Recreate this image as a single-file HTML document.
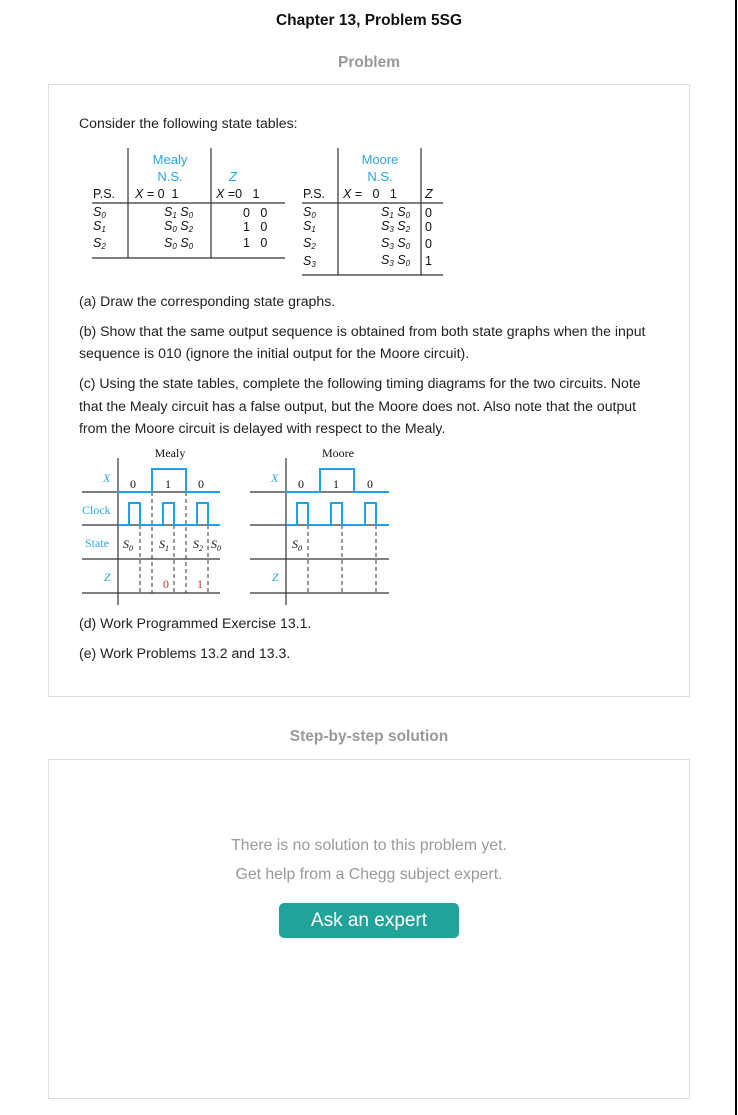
<!DOCTYPE html>
<html><head><meta charset="utf-8"><style>
body{margin:0;width:738px;height:1115px;background:#fff;position:relative;font-family:"Liberation Sans",sans-serif;overflow:hidden}
.a{position:absolute;white-space:nowrap}
.box{position:absolute;border:1px solid #ddd;box-sizing:border-box}
.p{font-size:14.1px;color:#222;line-height:22px}
</style></head><body>
<div style="position:absolute;left:735px;top:0;width:2px;height:1115px;background:#000"></div>
<div class="a" style="left:0;width:738px;text-align:center;top:12px;font-size:15.5px;font-weight:bold;color:#111">Chapter 13, Problem 5SG</div>
<div class="a" style="left:0;width:738px;text-align:center;top:54px;font-size:15.5px;font-weight:bold;color:#999">Problem</div>
<div class="box" style="left:48px;top:84px;width:642px;height:613px"></div>
<div class="a p" style="left:79px;top:112px">Consider the following state tables:</div>
<svg class="a" style="left:0;top:0" width="738" height="700" font-family="Liberation Sans,sans-serif" font-size="12">
<g stroke="#333" stroke-width="1.2">
<line x1="128" y1="148" x2="128" y2="258"/><line x1="211" y1="148" x2="211" y2="258"/>
<line x1="92" y1="203" x2="285" y2="203"/><line x1="92" y1="258" x2="285" y2="258"/>
<line x1="338" y1="148" x2="338" y2="275"/><line x1="421" y1="148" x2="421" y2="275"/>
<line x1="302" y1="203" x2="443" y2="203"/><line x1="302" y1="275" x2="443" y2="275"/>
</g>
<g fill="#2aa6e6" text-anchor="middle" font-size="13"><text x="170" y="164">Mealy</text><text x="170" y="181">N.S.</text><text x="233" y="181" font-style="italic">Z</text>
<text x="380" y="164">Moore</text><text x="380" y="181">N.S.</text></g>
<g fill="#111" font-size="12.5">
<text x="93" y="198">P.S.</text><text x="135" y="198"><tspan font-style="italic">X</tspan> = 0&#160;&#160;1</text><text x="216" y="198"><tspan font-style="italic">X</tspan> =0&#160;&#160;&#160;1</text>
<text x="303" y="198">P.S.</text><text x="343" y="198"><tspan font-style="italic">X</tspan> =&#160;&#160;&#160;0&#160;&#160;&#160;1</text><text x="425" y="198" font-style="italic">Z</text>
<g font-style="italic"><text x="93" y="216">S<tspan font-size="8" dy="2">0</tspan></text><text x="93" y="230">S<tspan font-size="8" dy="2">1</tspan></text><text x="93" y="247">S<tspan font-size="8" dy="2">2</tspan></text>
<text x="164" y="216">S<tspan font-size="8" dy="2">1</tspan><tspan dy="-2"> S</tspan><tspan font-size="8" dy="2">0</tspan></text>
<text x="164" y="230">S<tspan font-size="8" dy="2">0</tspan><tspan dy="-2"> S</tspan><tspan font-size="8" dy="2">2</tspan></text>
<text x="164" y="247">S<tspan font-size="8" dy="2">0</tspan><tspan dy="-2"> S</tspan><tspan font-size="8" dy="2">0</tspan></text>
<text x="303" y="216">S<tspan font-size="8" dy="2">0</tspan></text><text x="303" y="230">S<tspan font-size="8" dy="2">1</tspan></text><text x="303" y="247">S<tspan font-size="8" dy="2">2</tspan></text><text x="303" y="265">S<tspan font-size="8" dy="2">3</tspan></text>
<text x="381" y="216">S<tspan font-size="8" dy="2">1</tspan><tspan dy="-2"> S</tspan><tspan font-size="8" dy="2">0</tspan></text>
<text x="381" y="230">S<tspan font-size="8" dy="2">3</tspan><tspan dy="-2"> S</tspan><tspan font-size="8" dy="2">2</tspan></text>
<text x="381" y="247">S<tspan font-size="8" dy="2">3</tspan><tspan dy="-2"> S</tspan><tspan font-size="8" dy="2">0</tspan></text>
<text x="381" y="264">S<tspan font-size="8" dy="2">3</tspan><tspan dy="-2"> S</tspan><tspan font-size="8" dy="2">0</tspan></text></g>
<text x="243" y="217">0&#160;&#160;&#160;0</text><text x="243" y="231">1&#160;&#160;&#160;0</text><text x="243" y="247">1&#160;&#160;&#160;0</text>
<text x="425" y="217">0</text><text x="425" y="231">0</text><text x="425" y="248">0</text><text x="425" y="265">1</text>
</g>
</svg>
<div class="a p" style="left:79px;top:290px">(a) Draw the corresponding state graphs.</div>
<div class="a p" style="left:79px;top:320px">(b) Show that the same output sequence is obtained from both state graphs when the input<br>sequence is 010 (ignore the initial output for the Moore circuit).</div>
<div class="a p" style="left:79px;top:372px;line-height:22.5px">(c) Using the state tables, complete the following timing diagrams for the two circuits. Note<br>that the Mealy circuit has a false output, but the Moore does not. Also note that the output<br>from the Moore circuit is delayed with respect to the Mealy.</div>
<svg class="a" style="left:0;top:440px" width="420" height="170" font-family="Liberation Serif,serif" font-size="12">
<g transform="translate(0,-440)">
<g stroke="#333" stroke-width="1.2">
<line x1="118" y1="458" x2="118" y2="605"/><line x1="82" y1="492" x2="220" y2="492"/><line x1="82" y1="525" x2="220" y2="525"/><line x1="82" y1="559" x2="220" y2="559"/><line x1="82" y1="593" x2="220" y2="593"/>
<line x1="286" y1="458" x2="286" y2="605"/><line x1="250" y1="492" x2="389" y2="492"/><line x1="250" y1="525" x2="389" y2="525"/><line x1="250" y1="559" x2="389" y2="559"/><line x1="250" y1="593" x2="389" y2="593"/>
</g>
<g stroke="#333" stroke-dasharray="4,3" stroke-width="1">
<line x1="140" y1="525" x2="140" y2="593"/><line x1="152" y1="492" x2="152" y2="593"/><line x1="174" y1="525" x2="174" y2="593"/><line x1="186" y1="492" x2="186" y2="593"/><line x1="208" y1="525" x2="208" y2="593"/>
<line x1="308" y1="525" x2="308" y2="593"/><line x1="342" y1="525" x2="342" y2="593"/><line x1="376" y1="525" x2="376" y2="593"/>
</g>
<g stroke="#1aa3ea" stroke-width="2" fill="none">
<path d="M117 492H152V469H186V492H220"/><path d="M118 525H129V503H140V525H163V503H174V525H197V503H208V525H220"/>
<path d="M285 492H320V469H354V492H389"/><path d="M286 525H297V503H308V525H331V503H342V525H365V503H376V525H389"/>
</g>
<g fill="#111" text-anchor="middle"><text x="170" y="457">Mealy</text><text x="338" y="457">Moore</text>
<text x="133" y="488">0</text><text x="168" y="488">1</text><text x="201" y="488">0</text>
<text x="301" y="488">0</text><text x="336" y="488">1</text><text x="370" y="488">0</text>
<text x="166" y="588" fill="#b33">0</text><text x="200" y="588" fill="#b33">1</text>
<g font-style="italic"><text x="128" y="548">S<tspan font-size="8" dy="3">0</tspan></text><text x="164" y="548">S<tspan font-size="8" dy="3">1</tspan></text><text x="198" y="548">S<tspan font-size="8" dy="3">2</tspan></text><text x="216" y="548">S<tspan font-size="8" dy="3">0</tspan></text><text x="297" y="548">S<tspan font-size="8" dy="3">0</tspan></text></g></g>
<g fill="#2aa6e6"><text x="103" y="482" font-style="italic">X</text><text x="82" y="514">Clock</text><text x="85" y="547">State</text><text x="104" y="581" font-style="italic">Z</text>
<text x="271" y="482" font-style="italic">X</text><text x="272" y="581" font-style="italic">Z</text></g>
</g></svg>
<div class="a p" style="left:79px;top:612px">(d) Work Programmed Exercise 13.1.</div>
<div class="a p" style="left:79px;top:642px">(e) Work Problems 13.2 and 13.3.</div>
<div class="a" style="left:0;width:738px;text-align:center;top:728px;font-size:15.5px;font-weight:bold;color:#999">Step-by-step solution</div>
<div class="box" style="left:48px;top:759px;width:642px;height:340px"></div>
<div class="a" style="left:0;width:738px;text-align:center;top:837px;font-size:15.8px;color:#999">There is no solution to this problem yet.</div>
<div class="a" style="left:0;width:738px;text-align:center;top:866px;font-size:15.8px;color:#999">Get help from a Chegg subject expert.</div>
<div class="a" style="left:279px;top:903px;width:180px;height:35px;background:#21a39a;border-radius:5px;color:#fff;text-align:center;line-height:35px;font-size:19px;font-family:'Liberation Sans',sans-serif">Ask an expert</div>
</body></html>
